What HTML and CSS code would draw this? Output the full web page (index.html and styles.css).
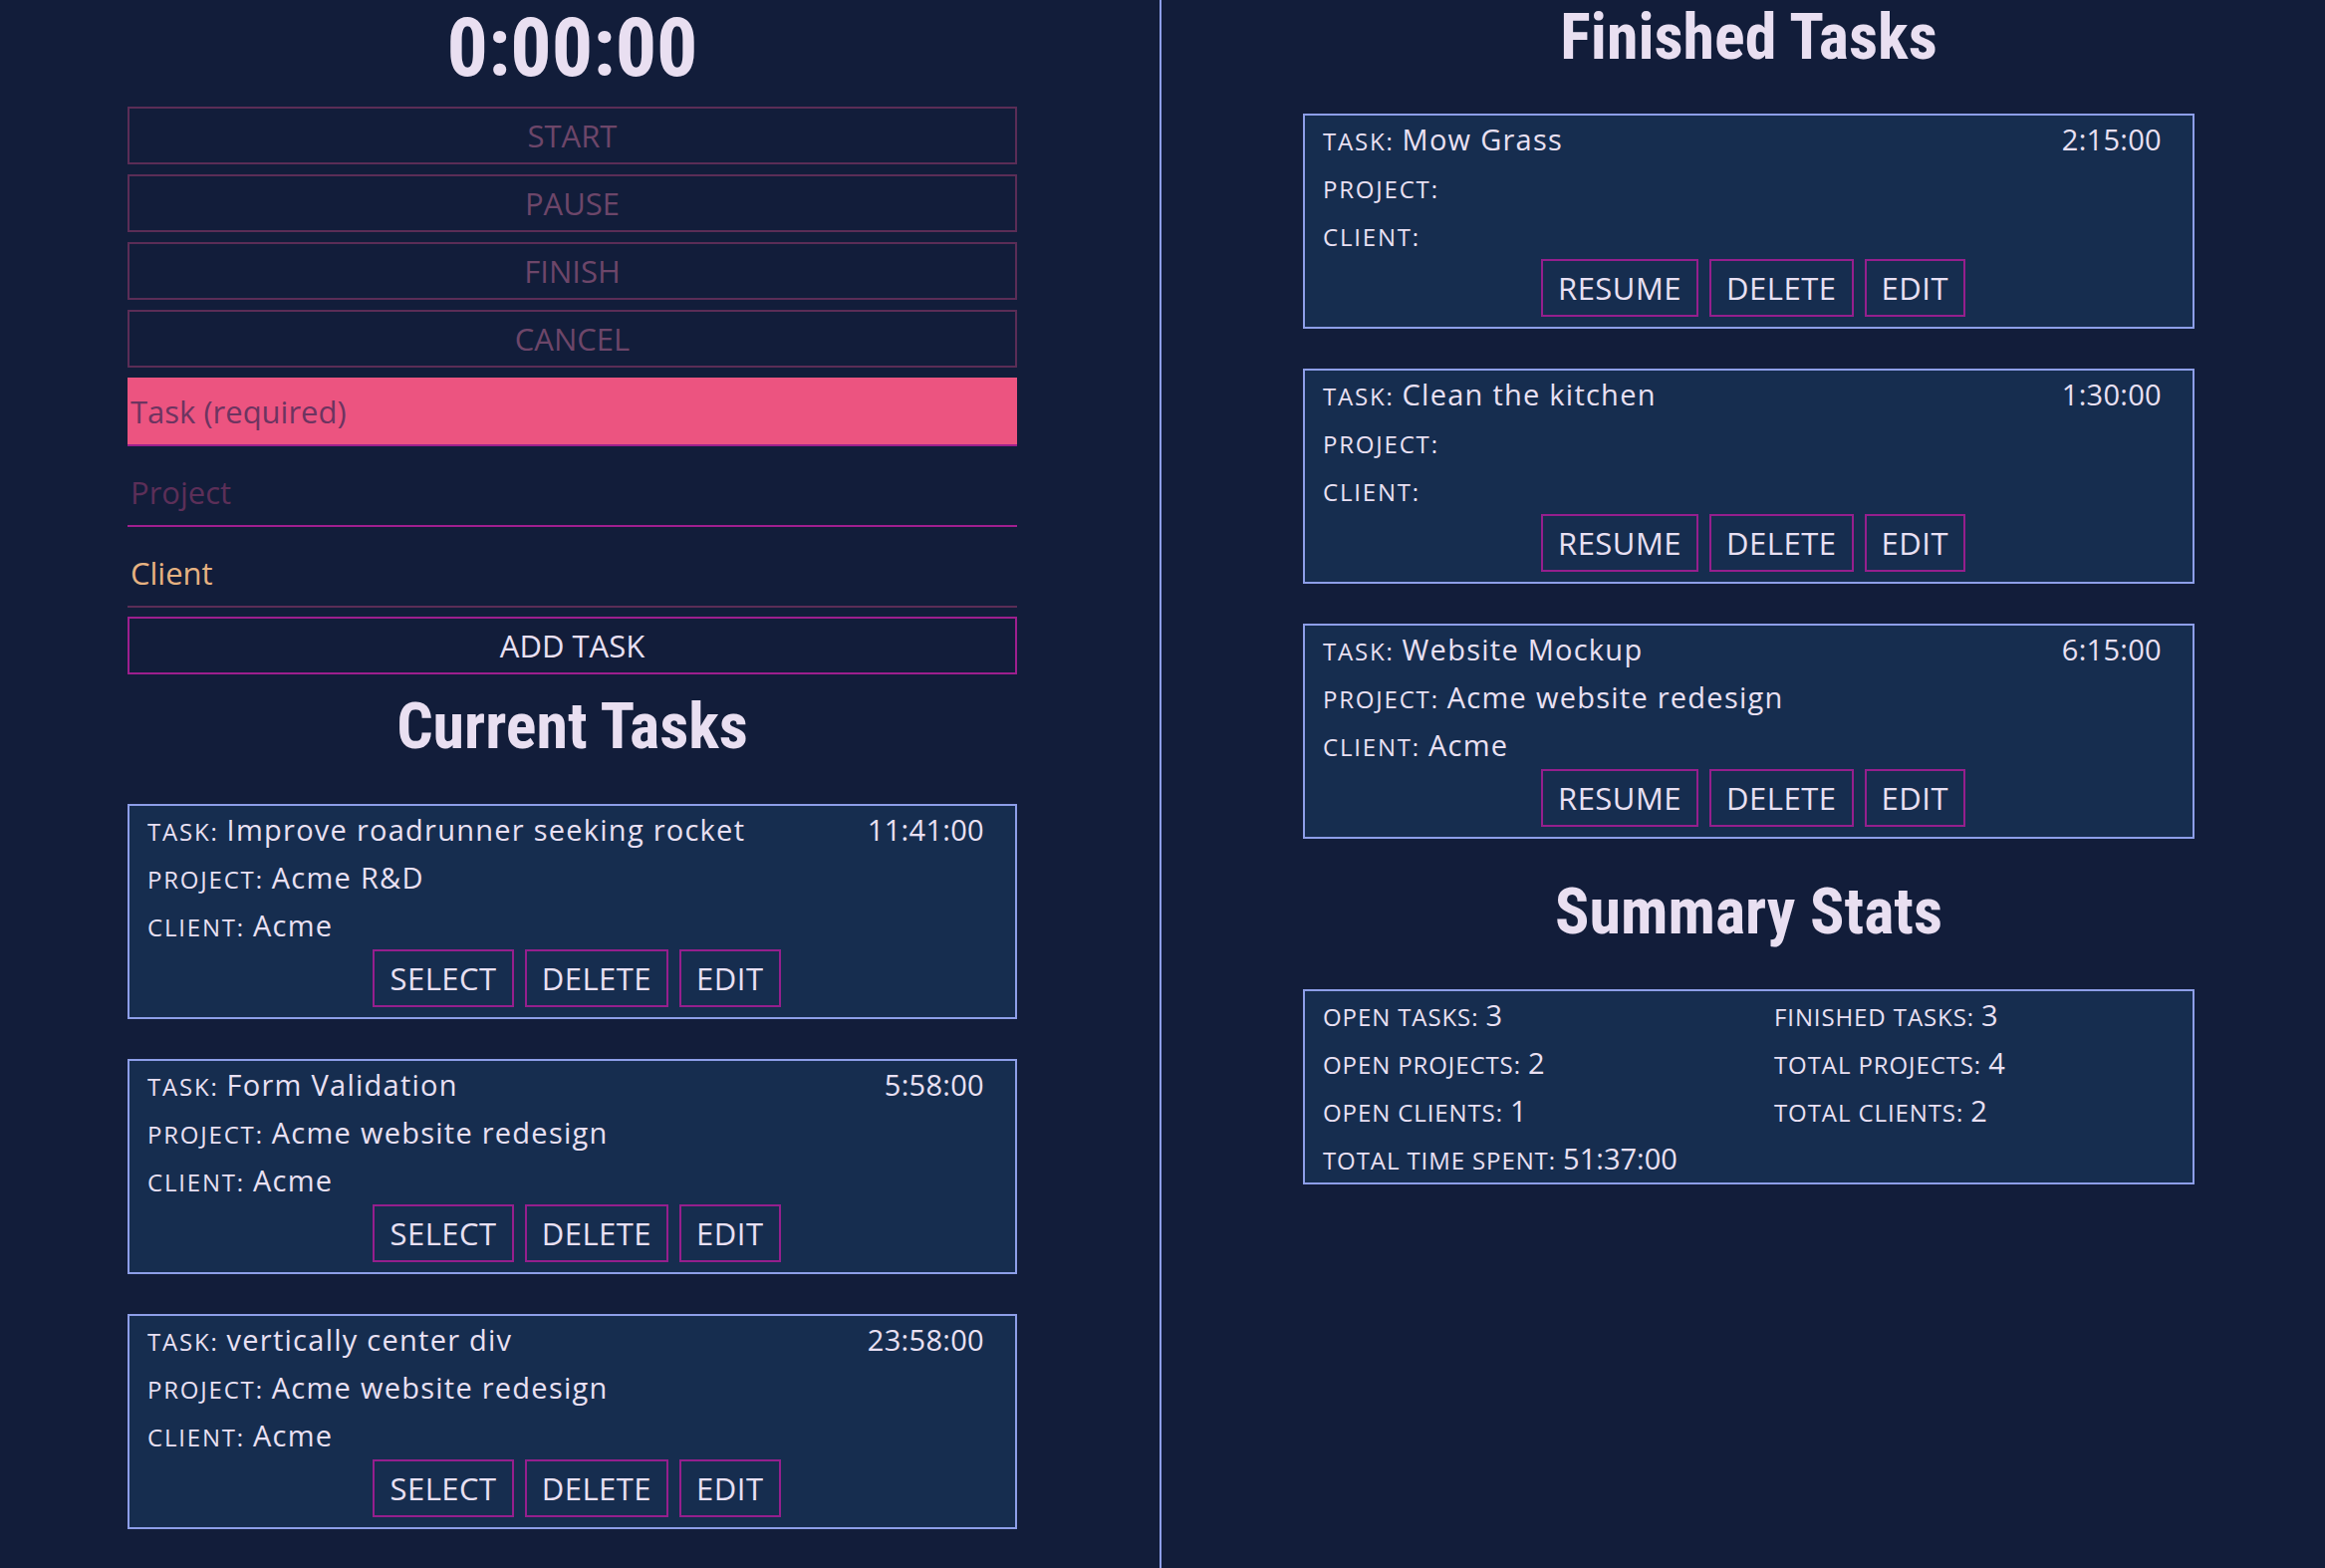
FILE: index.html
```html
<!DOCTYPE html>
<html lang="en">
<head>
<meta charset="utf-8">
<title>Time Tracker</title>
<link rel="stylesheet" href="styles.css">
</head>
<body>
<div class="app">
  <section class="col col-left">
    <h1 class="timer">0:00:00</h1>
    <div class="controls">
      <button class="ctrl" disabled>START</button>
      <button class="ctrl" disabled>PAUSE</button>
      <button class="ctrl" disabled>FINISH</button>
      <button class="ctrl" disabled>CANCEL</button>
    </div>
    <form class="task-form">
      <input class="field field-task" type="text" placeholder="Task (required)">
      <input class="field field-project" type="text" placeholder="Project">
      <input class="field field-client" type="text" placeholder="Client">
      <button type="button" class="add-btn">ADD TASK</button>
    </form>
    <h2 class="heading heading-current">Current Tasks</h2>
    <div class="task-list">
      <article class="card">
        <div class="row row-top"><span><span class="label">Task: </span>Improve roadrunner seeking rocket</span><span class="time">11:41:00</span></div>
        <div class="row"><span class="label">Project: </span>Acme R&amp;D</div>
        <div class="row"><span class="label">Client: </span>Acme</div>
        <div class="actions"><button class="btn">SELECT</button><button class="btn">DELETE</button><button class="btn">EDIT</button></div>
      </article>
      <article class="card">
        <div class="row row-top"><span><span class="label">Task: </span>Form Validation</span><span class="time">5:58:00</span></div>
        <div class="row"><span class="label">Project: </span>Acme website redesign</div>
        <div class="row"><span class="label">Client: </span>Acme</div>
        <div class="actions"><button class="btn">SELECT</button><button class="btn">DELETE</button><button class="btn">EDIT</button></div>
      </article>
      <article class="card">
        <div class="row row-top"><span><span class="label">Task: </span>vertically center div</span><span class="time">23:58:00</span></div>
        <div class="row"><span class="label">Project: </span>Acme website redesign</div>
        <div class="row"><span class="label">Client: </span>Acme</div>
        <div class="actions"><button class="btn">SELECT</button><button class="btn">DELETE</button><button class="btn">EDIT</button></div>
      </article>
    </div>
  </section>
  <div class="divider"></div>
  <section class="col col-right">
    <h2 class="heading heading-finished">Finished Tasks</h2>
    <div class="task-list">
      <article class="card">
        <div class="row row-top"><span><span class="label">Task: </span>Mow Grass</span><span class="time">2:15:00</span></div>
        <div class="row"><span class="label">Project: </span></div>
        <div class="row"><span class="label">Client: </span></div>
        <div class="actions"><button class="btn">RESUME</button><button class="btn">DELETE</button><button class="btn">EDIT</button></div>
      </article>
      <article class="card">
        <div class="row row-top"><span><span class="label">Task: </span>Clean the kitchen</span><span class="time">1:30:00</span></div>
        <div class="row"><span class="label">Project: </span></div>
        <div class="row"><span class="label">Client: </span></div>
        <div class="actions"><button class="btn">RESUME</button><button class="btn">DELETE</button><button class="btn">EDIT</button></div>
      </article>
      <article class="card">
        <div class="row row-top"><span><span class="label">Task: </span>Website Mockup</span><span class="time">6:15:00</span></div>
        <div class="row"><span class="label">Project: </span>Acme website redesign</div>
        <div class="row"><span class="label">Client: </span>Acme</div>
        <div class="actions"><button class="btn">RESUME</button><button class="btn">DELETE</button><button class="btn">EDIT</button></div>
      </article>
    </div>
    <h2 class="heading heading-summary">Summary Stats</h2>
    <div class="stats">
      <div class="stat"><span class="label">Open Tasks: </span>3</div>
      <div class="stat"><span class="label">Finished Tasks: </span>3</div>
      <div class="stat"><span class="label">Open Projects: </span>2</div>
      <div class="stat"><span class="label">Total Projects: </span>4</div>
      <div class="stat"><span class="label">Open Clients: </span>1</div>
      <div class="stat"><span class="label">Total Clients: </span>2</div>
      <div class="stat"><span class="label">Total Time Spent: </span>51:37:00</div>
    </div>
  </section>
</div>
</body>
</html>
```
FILE: styles.css
```css
* {
  box-sizing: border-box;
}

html,
body {
  margin: 0;
  padding: 0;
}

body {
  background: #121d3a;
  color: #e9e0f3;
  font-family: "Open Sans", "Noto Sans", sans-serif;
  overflow: hidden;
}

.app {
  display: flex;
  min-height: 100vh;
}

.col-left {
  flex: none;
  width: 1149px;
  padding: 0 128px;
}

.divider {
  flex: none;
  width: 2px;
  margin-left: 15px;
  background: #8d9ee8;
}

.col-right {
  flex: 1;
  padding: 0 131px 0 142px;
}

.timer,
.heading {
  margin: 0;
  font-family: "Liberation Sans Narrow", "Roboto Condensed", "DejaVu Sans Condensed", sans-serif;
  font-weight: 700;
  text-align: center;
  color: #e9dff1;
}

.timer {
  font-size: 82px;
  line-height: normal;
  margin: 0 0 11px;
}

.heading {
  font-size: 64px;
  line-height: 1;
}

.heading-current {
  margin: 21px 0 45px;
}

.heading-finished {
  margin: 6px 0 44px;
}

.heading-summary {
  margin: 42px 0 45px;
}

.controls {
  display: flex;
  flex-direction: column;
  gap: 10px;
}

button {
  font-family: inherit;
  cursor: pointer;
}

.ctrl {
  width: 100%;
  height: 58px;
  padding: 0;
  border: 2px solid #5b2d56;
  background: transparent;
  color: #6d4669;
  font-size: 31px;
}

.task-form {
  display: flex;
  flex-direction: column;
  margin: 10px 0 0;
}

.field {
  width: 100%;
  height: 69px;
  padding: 0 3px;
  border: 0;
  border-bottom: 2px solid #5b2d56;
  background: transparent;
  font-family: inherit;
  font-size: 31px;
  color: #e9e0f3;
  outline: none;
}

.field-task {
  background: #ec5480;
  border-bottom-color: #9e1f8d;
}

.field-task::placeholder {
  color: #6d3460;
  opacity: 1;
}

.field-project {
  margin-top: 12px;
  border-bottom-color: #a01f8f;
}

.field-project::placeholder {
  color: #5c2f58;
  opacity: 1;
}

.field-client {
  margin-top: 12px;
}

.field-client::placeholder {
  color: #e6b281;
  opacity: 1;
}

.add-btn {
  margin-top: 9px;
  height: 58px;
  padding: 0;
  border: 2px solid #9d1f8e;
  background: transparent;
  color: #e9e0f3;
  font-size: 31px;
}

.task-list {
  display: flex;
  flex-direction: column;
  gap: 40px;
}

.card,
.stats {
  border: 2px solid #8d9ee8;
  background: #162d4f;
}

.card {
  padding: 0 31px 10px 18px;
}

.row,
.stat {
  height: 48px;
  line-height: 48px;
  font-size: 29px;
  white-space: nowrap;
}

.row {
  letter-spacing: 1.25px;
}

.time {
  letter-spacing: 0.3px;
}

.row-top {
  display: flex;
  justify-content: space-between;
}

.label {
  font-size: 24px;
  line-height: 1;
  letter-spacing: 1.8px;
  text-transform: uppercase;
}

.stat .label {
  letter-spacing: 0.9px;
}

.actions {
  display: flex;
  justify-content: center;
  gap: 11px;
  margin: 0 -31px 0 -18px;
  padding-left: 9px;
}

.btn {
  height: 58px;
  padding: 0 15px;
  border: 2px solid #951f8d;
  background: transparent;
  color: #e9e0f3;
  font-size: 31px;
  letter-spacing: 0.5px;
}

.stats {
  display: grid;
  grid-template-columns: 453px 1fr;
  padding: 0 31px 0 18px;
}
```
